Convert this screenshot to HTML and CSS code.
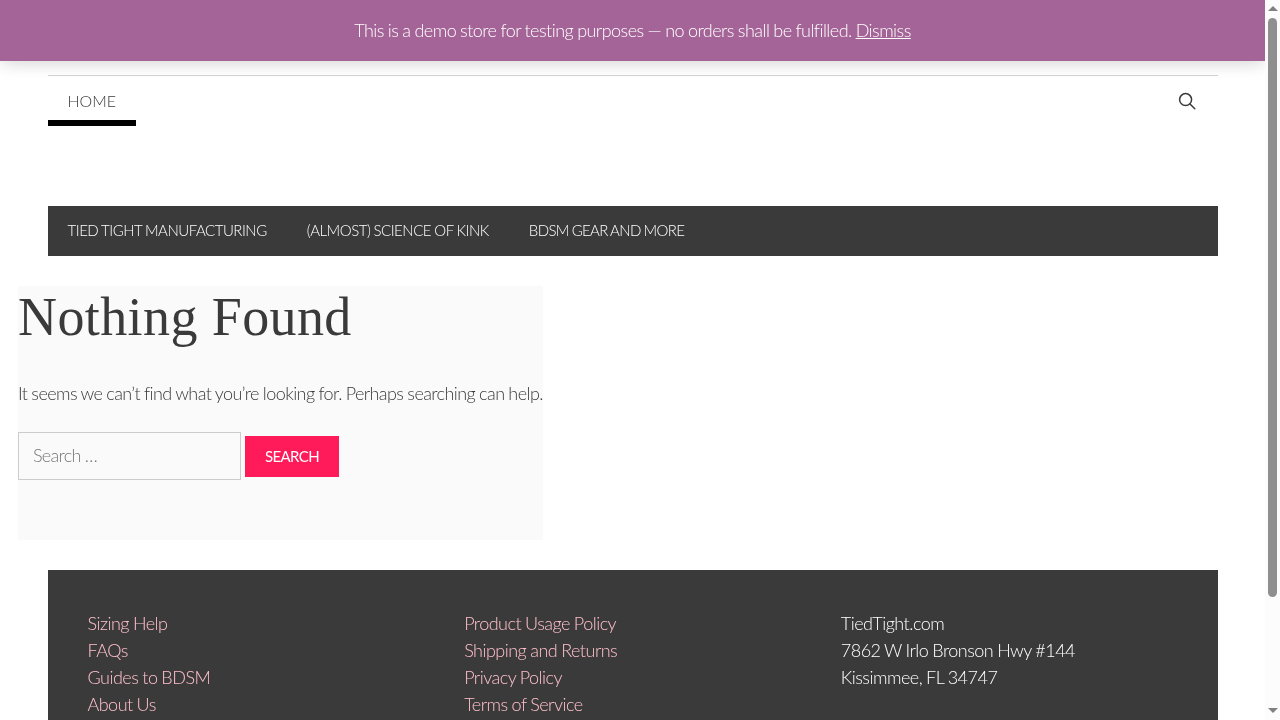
FILE: index.html
```html
<!DOCTYPE html>
<html lang="en">
<head>
<meta charset="utf-8">
<title>Nothing Found</title>
<link rel="stylesheet" href="styles.css">
</head>
<body>
<p class="demo-notice">This is a demo store for testing purposes — no orders shall be fulfilled. <a href="#">Dismiss</a></p>
<header class="site-header">
  <nav class="top-nav">
    <a class="top-link" href="#">HOME</a>
    <a class="search-toggle" href="#" aria-label="Search">
      <svg viewBox="0 0 18 18" width="18" height="18" fill="none" stroke="#3a3a3a" stroke-width="1.5" stroke-linecap="round"><circle cx="7.6" cy="7.6" r="6"/><path d="M12 12l4.8 4.8"/></svg>
    </a>
  </nav>
  <nav class="main-nav">
    <a href="#">TIED TIGHT MANUFACTURING</a>
    <a href="#">(ALMOST) SCIENCE OF KINK</a>
    <a class="tight" href="#">BDSM GEAR AND MORE</a>
  </nav>
</header>
<main class="content">
  <h1>Nothing Found</h1>
  <p class="lead">It seems we can’t find what you’re looking for. Perhaps searching can help.</p>
  <form class="search-form">
    <input type="search" placeholder="Search …">
    <button type="button">SEARCH</button>
  </form>
</main>
<footer class="site-footer">
  <ul class="col">
    <li><a href="#">Sizing Help</a></li>
    <li><a href="#">FAQs</a></li>
    <li><a href="#">Guides to BDSM</a></li>
    <li><a href="#">About Us</a></li>
  </ul>
  <ul class="col">
    <li><a href="#">Product Usage Policy</a></li>
    <li><a href="#">Shipping and Returns</a></li>
    <li><a href="#">Privacy Policy</a></li>
    <li><a href="#">Terms of Service</a></li>
  </ul>
  <ul class="col address">
    <li>TiedTight.com</li>
    <li>7862 W Irlo Bronson Hwy #144</li>
    <li>Kissimmee, FL 34747</li>
  </ul>
</footer>
<div class="scrollbar" aria-hidden="true">
  <span class="arrow-up"></span>
  <span class="thumb"></span>
  <span class="arrow-down"></span>
</div>
</body>
</html>
```
FILE: styles.css
```css
* { box-sizing: border-box; }
body {
  margin: 0;
  padding: 75px 15px 0 0;
  font-family: Lato, "Liberation Sans", sans-serif;
  font-weight: 300;
  font-size: 18px;
  line-height: 27px;
  letter-spacing: -.52px;
  word-spacing: -.4px;
  color: #3a3a3a;
  background: #fff;
  opacity: .999;
}
a { color: inherit; text-decoration: none; }
.demo-notice {
  position: fixed;
  top: 0; left: 0; right: 15px;
  margin: 0;
  height: 61px;
  line-height: 61px;
  text-align: center;
  letter-spacing: -.54px;
  background: #a46497;
  color: #fff;
  box-shadow: 0 1px 1em rgba(0,0,0,.2);
  z-index: 5;
}
.demo-notice a { text-decoration: underline; }
.scrollbar {
  position: fixed;
  top: 0; right: 0; bottom: 0;
  width: 15px;
  display: flex;
  flex-direction: column;
  align-items: center;
  padding: 6px 0 7px;
  background: #fcfcfc;
  z-index: 6;
}
.arrow-up, .arrow-down {
  width: 0;
  height: 0;
  border-left: 5px solid transparent;
  border-right: 5px solid transparent;
}
.arrow-up { border-bottom: 5px solid #808080; }
.arrow-down { border-top: 5px solid #808080; margin-top: 111px; }
.thumb {
  width: 9px;
  height: 579px;
  margin-top: 7px;
  background: #8f8f8f;
  border-radius: 5px;
}
.site-header { width: 1170px; margin: 0 auto; }
.top-nav {
  display: flex;
  justify-content: space-between;
  height: 131px;
  border-top: 1px solid #d3d3d3;
  align-items: flex-start;
}
.top-link {
  display: block;
  height: 50px;
  padding: 0 20px;
  font-size: 16px;
  line-height: 50px;
  letter-spacing: 0;
  border-bottom: 6px solid #000;
}
.search-toggle { display: flex; align-items: center; height: 50px; padding: 0 22px 0 20px; }
.main-nav {
  display: flex;
  height: 50px;
  background: #3a3a3a;
  font-size: 15px;
  line-height: 49px;
  letter-spacing: -.48px;
  color: #fff;
}
.main-nav a { padding: 0 20px; }
.main-nav a.tight { letter-spacing: -.68px; }
.content {
  width: 525px;
  height: 254px;
  margin: 30px 0 30px 18px;
  background: #fafafa;
}
h1 {
  margin: 0;
  padding-top: 1px;
  font-family: "Liberation Serif", serif;
  font-weight: 400;
  font-size: 54px;
  line-height: 60px;
  letter-spacing: .4px;
  word-spacing: 0;
  color: #3a3a3a;
}
.lead { margin: 33px 0 25px; white-space: nowrap; letter-spacing: -.58px; }
.search-form { display: flex; align-items: center; gap: 4px; }
input {
  width: 223px;
  height: 48px;
  padding: 0 15px 2px 14px;
  border: 1px solid #ccc;
  background: #fafafa;
  font: inherit;
  letter-spacing: -.7px;
  color: #3a3a3a;
}
input::placeholder { color: #777; opacity: 1; }
button {
  width: 94px;
  height: 41px;
  padding: 0;
  border: 0;
  background: #ff1a5a;
  color: #fff;
  font-family: inherit;
  font-weight: 400;
  font-size: 15px;
  letter-spacing: -.6px;
}
.site-footer {
  display: grid;
  grid-template-columns: repeat(3, 1fr);
  width: 1170px;
  height: 281px;
  margin: 0 auto;
  padding: 40px 0 0 40px;
  background: #3a3a3a;
  color: #fff;
}
.col { margin: 0; padding: 0; list-style: none; }
.col a { color: #ffc0cb; }
```
